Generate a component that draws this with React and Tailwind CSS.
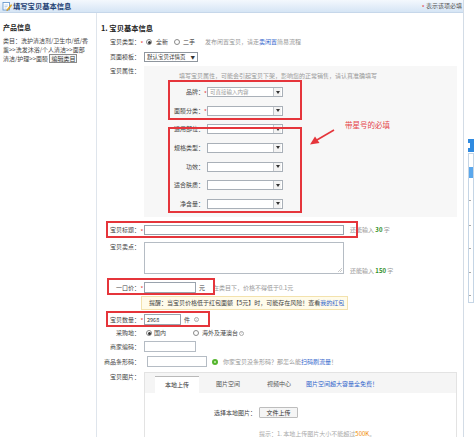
import React from "react";

const Star = () => <span className="relative top-[1.5px] text-[#e4393c]">*</span>;

const Radio = ({ checked }) => (
  <span className="flex h-[6px] w-[6px] shrink-0 items-center justify-center rounded-full border border-[#8a8a8a] bg-white">
    {checked && <span className="h-[3px] w-[3px] rounded-full bg-[#333]" />}
  </span>
);

const Arrow = () => (
  <span className="ml-[1px] flex h-[8px] w-[8px] shrink-0 items-center justify-center border-l border-[#c2c6cb] bg-[#f3f3f3]">
    <svg width="4" height="3" viewBox="0 0 4 3">
      <path d="M0 0h4L2 3z" fill="#333" />
    </svg>
  </span>
);

const Sel = ({ placeholder }) => (
  <div className="flex h-[10px] w-[76px] items-center border border-[#a9b0b8] bg-white pr-[1px]">
    <span className="flex-1 whitespace-nowrap pl-[2px] text-[5.5px] leading-[8px] text-[#999]">{placeholder}</span>
    <Arrow />
  </div>
);

const Row = ({ label, star, children, className = "", items = "items-center" }) => (
  <div className={`relative flex ${items} ${className}`}>
    <div className="w-[39px] shrink-0 whitespace-nowrap text-right">{label}</div>
    <div className="w-[4px] shrink-0 text-center">{star ? <Star /> : null}</div>
    {children}
  </div>
);

const AttrRow = ({ label, star, placeholder }) => (
  <div className="flex h-[10px] items-center">
    <div className="w-[60px] shrink-0 whitespace-nowrap text-right">{label}</div>
    <div className="w-[3px] shrink-0 text-center">{star ? <Star /> : null}</div>
    <Sel placeholder={placeholder} />
  </div>
);

const InfoIcon = () => (
  <span className="flex h-[5px] w-[5px] shrink-0 items-center justify-center rounded-full border border-[#aaa] text-[3.5px] leading-none text-[#999]">
    i
  </span>
);

export default function App() {
  return (
    <div className="flex h-[437px] w-[474px] overflow-hidden bg-white font-['Noto_Sans_CJK_SC',sans-serif] text-[6px] leading-[10px] text-[#444]">
      {/* left / main part */}
      <div className="flex w-[464px] shrink-0 flex-col border-r border-[#d3dce6]">
        {/* header */}
        <div className="flex h-[13px] shrink-0 items-center justify-between border-b border-[#c6d7ea] bg-linear-to-b from-[#f4f8fd] to-[#d6e5f5] pl-[2px] pr-[1px]">
          <div className="flex items-center">
            <svg width="10" height="10" viewBox="0 0 10 10">
              <rect x="1" y="1.5" width="6.5" height="7.5" fill="#fff" stroke="#5b8fc9" strokeWidth="0.8" />
              <path d="M2.5 4h3.5M2.5 5.5h3M2.5 7h2" stroke="#9bb8da" strokeWidth="0.6" />
              <path d="M5 8.5l4-5 0.9 0.8-4 5-1.2 0.3z" fill="#f2b21c" stroke="#c27d00" strokeWidth="0.4" />
            </svg>
            <span className="ml-[1px] text-[7.3px] font-bold leading-[10px] text-[#1d3f73]">填写宝贝基本信息</span>
          </div>
          <div className="text-[6px] leading-[10px] text-[#555]">
            <Star /> 表示该项必填
          </div>
        </div>

        {/* body */}
        <div className="flex flex-1">
          {/* sidebar */}
          <div className="w-[97px] shrink-0 border-r border-[#dfe5ec] px-[3px]">
            <div className="mt-[9px] h-[10px] text-[7px] font-bold leading-[10px] text-[#222]">产品信息</div>
            <div className="mt-[3.5px] whitespace-nowrap leading-[9px] text-[#444]">
              类目：洗护清洁剂/卫生巾/纸/香
              <br />
              薰&gt;&gt;洗发沐浴/个人清洁&gt;&gt;面部
              <br />
              清洁/护理&gt;&gt;面膜{" "}
              <span className="inline-block border border-[#8c8c8c] bg-[#f7f7f7] px-[1px] leading-[7.5px] text-[#333]">
                编辑类目
              </span>
            </div>
          </div>

          {/* main */}
          <div className="relative flex-1 pl-[4px]">
            <div className="mt-[10px] h-[10px] text-[7.3px] font-bold leading-[10px] text-[#222]">1. 宝贝基本信息</div>

            <Row label="宝贝类型：" star className="mt-[4px] h-[10px]">
              <span className="ml-[2px]"><Radio checked /></span>
              <span className="ml-[4px]">全新</span>
              <span className="ml-[6px]"><Radio /></span>
              <span className="ml-[3px]">二手</span>
              <span className="ml-[10px] whitespace-nowrap text-[#999]">
                发布闲置宝贝，请走<span className="text-[#3366cc]">卖闲置</span>简易流程
              </span>
            </Row>

            <Row label="页面模板：" className="mt-[5px] h-[10px]">
              <div className="flex h-[10px] w-[54px] items-center justify-between border border-[#8f969e] bg-white px-[2px] text-[5.5px] leading-[8px] text-[#333]">
                <span className="whitespace-nowrap">默认宝贝详情页</span>
                <span className="text-[4.5px]">▼</span>
              </div>
            </Row>

            <Row label="宝贝属性：" className="mt-[4px]" items="items-start">
              <div className="relative h-[151px] w-[313px] bg-[#f7f7f7]">
                <div className="pl-[35px] pt-[5px] leading-[10px] whitespace-nowrap text-[#999]">
                  填写宝贝属性，可能会引起宝贝下架，影响您的正常销售，请认真准确填写
                </div>
                <div className="mt-[6px] flex flex-col gap-[8.67px]">
                  <AttrRow label="品牌：" star placeholder="可直接输入内容" />
                  <AttrRow label="面膜分类：" star />
                  <AttrRow label="适用部位：" />
                  <AttrRow label="规格类型：" />
                  <AttrRow label="功效：" />
                  <AttrRow label="适合肤质：" />
                  <AttrRow label="净含量：" />
                </div>
                <div className="absolute left-[24px] top-[14px] h-[40px] w-[134px] border-2 border-[#e5353b]" />
                <div className="absolute left-[24px] top-[61px] h-[86px] w-[134px] border-2 border-[#e5353b]" />
                <svg className="absolute left-[160px] top-[58px]" width="36" height="26" viewBox="0 0 36 26">
                  <path d="M30 6L12 16.5" stroke="#e5353b" strokeWidth="1.6" />
                  <path d="M6 20.5L11 12.5L15.5 19z" fill="#e5353b" />
                </svg>
                <div className="absolute left-[201px] top-[54px] whitespace-nowrap text-[7.5px] leading-[10px] text-[#e5454a]">
                  带星号的必填
                </div>
              </div>
            </Row>

            <Row label="宝贝标题：" star className="mt-[8px] h-[10px]">
              <div className="h-[10px] w-[200px] border border-[#9aa3ad] bg-white" />
              <span className="ml-[6px] whitespace-nowrap text-[#999]">
                还能输入 <b className="text-[#2f8f1f]">30</b> 字
              </span>
              <div className="absolute -top-[4px] left-[5px] h-[17px] w-[252px] border-2 border-[#e5353b]" />
            </Row>

            <Row label={<span className="leading-[6px]">宝贝卖点：</span>} className="mt-[7px]" items="items-start">
              <div className="relative h-[32px] w-[200px] border border-[#b5bcc4] bg-white">
                <svg className="absolute bottom-[1px] right-[1px]" width="4" height="4" viewBox="0 0 4 4">
                  <path d="M4 0L0 4M4 2L2 4" stroke="#999" strokeWidth="0.5" />
                </svg>
              </div>
              <span className="ml-[6px] self-end whitespace-nowrap leading-[6px] text-[#999]">
                还能输入 <b className="text-[#2f8f1f]">150</b> 字
              </span>
            </Row>

            <Row label="一口价：" star className="mt-[8px] h-[11px]">
              <div className="h-[11px] w-[52px] border border-[#9aa3ad] bg-white" />
              <span className="ml-[3px]">元</span>
              <span className="ml-[8px] whitespace-nowrap text-[#999]">在类目下，价格不得低于0.1元</span>
              <div className="absolute -top-[4px] left-[6px] h-[17px] w-[108px] border-2 border-[#e5353b]" />
            </Row>

            <div className="ml-[40px] mt-[3px] h-[14px] w-[207px] whitespace-nowrap border border-[#f3e2ad] bg-[#fffbea] pl-[7px] leading-[12px] text-[#444]">
              提醒：当宝贝价格低于红包面额【5元】时，可能存在风险！查看<span className="text-[#3366cc]">我的红包</span>
            </div>

            <Row label="宝贝数量：" star className="mt-[4px] h-[11px]">
              <div className="flex h-[11px] w-[37px] items-center border border-[#9aa3ad] bg-white pl-[2px] text-[5.5px] leading-[8px] text-[#333]">
                2968
              </div>
              <span className="ml-[3px]">件</span>
              <span className="ml-[4px]"><InfoIcon /></span>
              <div className="absolute -top-[3px] left-[5px] h-[16px] w-[104px] border-2 border-[#e5353b]" />
            </Row>

            <Row label="采购地：" className="mt-[3px] h-[10px]">
              <span className="ml-[2px]"><Radio checked /></span>
              <span className="ml-[2px]">国内</span>
              <span className="ml-[27px]"><Radio /></span>
              <span className="ml-[3px] whitespace-nowrap">海外及港澳台</span>
              <span className="ml-[1px]"><InfoIcon /></span>
            </Row>

            <Row label="商家编码：" className="mt-[3px] h-[11px]">
              <div className="h-[11px] w-[52px] border border-[#b5bcc4] bg-white" />
            </Row>

            <Row label="商品条形码：" className="mt-[4px] h-[11px]">
              <div className="ml-[3px] h-[11px] w-[60px] border border-[#b5bcc4] bg-white" />
              <span className="ml-[5px] flex h-[6px] w-[6px] items-center justify-center rounded-full bg-[#55b52f]">
                <span className="h-[2px] w-[2px] rounded-full bg-[#c9efb4]" />
              </span>
              <span className="ml-[5px] whitespace-nowrap text-[#999]">
                你家宝贝没条形码？那怎么能<span className="text-[#3366cc]">扫码刷流量</span>！
              </span>
            </Row>

            <Row label={<span className="leading-[6px]">宝贝图片：</span>} className="mt-[5px]" items="items-start">
              <div className="h-[80px] w-[313px] border border-[#e3e3e3] bg-white">
                <div className="flex h-[20px] items-end bg-[#f5f5f5] pl-[10px]">
                  <div className="h-[17px] w-[44px] border-t border-[#b9b9b9] bg-white text-center leading-[16px] text-[#333]">
                    本地上传
                  </div>
                  <div className="ml-[7px] h-[17px] w-[44px] text-center leading-[16px] text-[#555]">图片空间</div>
                  <div className="ml-[7px] h-[17px] w-[44px] text-center leading-[16px] text-[#555]">视频中心</div>
                  <div className="ml-[5px] h-[17px] whitespace-nowrap leading-[16px] text-[#3366cc]">图片空间超大容量全免费！</div>
                </div>
                <div className="mt-[14px] flex h-[11px] items-center pl-[69px]">
                  <span className="whitespace-nowrap text-[#444]">选择本地图片：</span>
                  <span className="ml-[3px] flex h-[11px] w-[39px] items-center justify-center rounded-[1px] border border-[#bdbdbd] bg-[#f5f5f5] text-[#333]">
                    文件上传
                  </span>
                </div>
                <div className="mt-[13px] whitespace-nowrap pl-[114px] leading-[6px] text-[#aaa]">
                  提示：1. 本地上传图片大小不能超过<span className="text-[#f08a00]">500K</span>。
                </div>
              </div>
            </Row>
          </div>
        </div>
      </div>

      {/* right strip */}
      <div className="w-[10px] shrink-0 pl-[4px]">
        <div className="mt-[139px] flex h-[13px] items-center bg-[#2f8ae0]">
          <span className="h-[5px] w-[2px] bg-white" />
        </div>
        <div className="mt-[1px] h-[150px] border border-[#c5d5e5] bg-white">
          <div className="mt-[13px] h-[11px] bg-[#5aa7ec]" />
          <div className="mt-[22px] h-[1px] w-[2px] bg-[#aaa]" />
          <div className="mt-[24px] h-[1px] w-[2px] bg-[#aaa]" />
          <div className="mt-[22px] h-[1px] w-[2px] bg-[#aaa]" />
          <div className="mt-[23px] h-[1px] w-[2px] bg-[#aaa]" />
          <div className="mt-[22px] h-[1px] w-[2px] bg-[#aaa]" />
        </div>
      </div>
    </div>
  );
}
